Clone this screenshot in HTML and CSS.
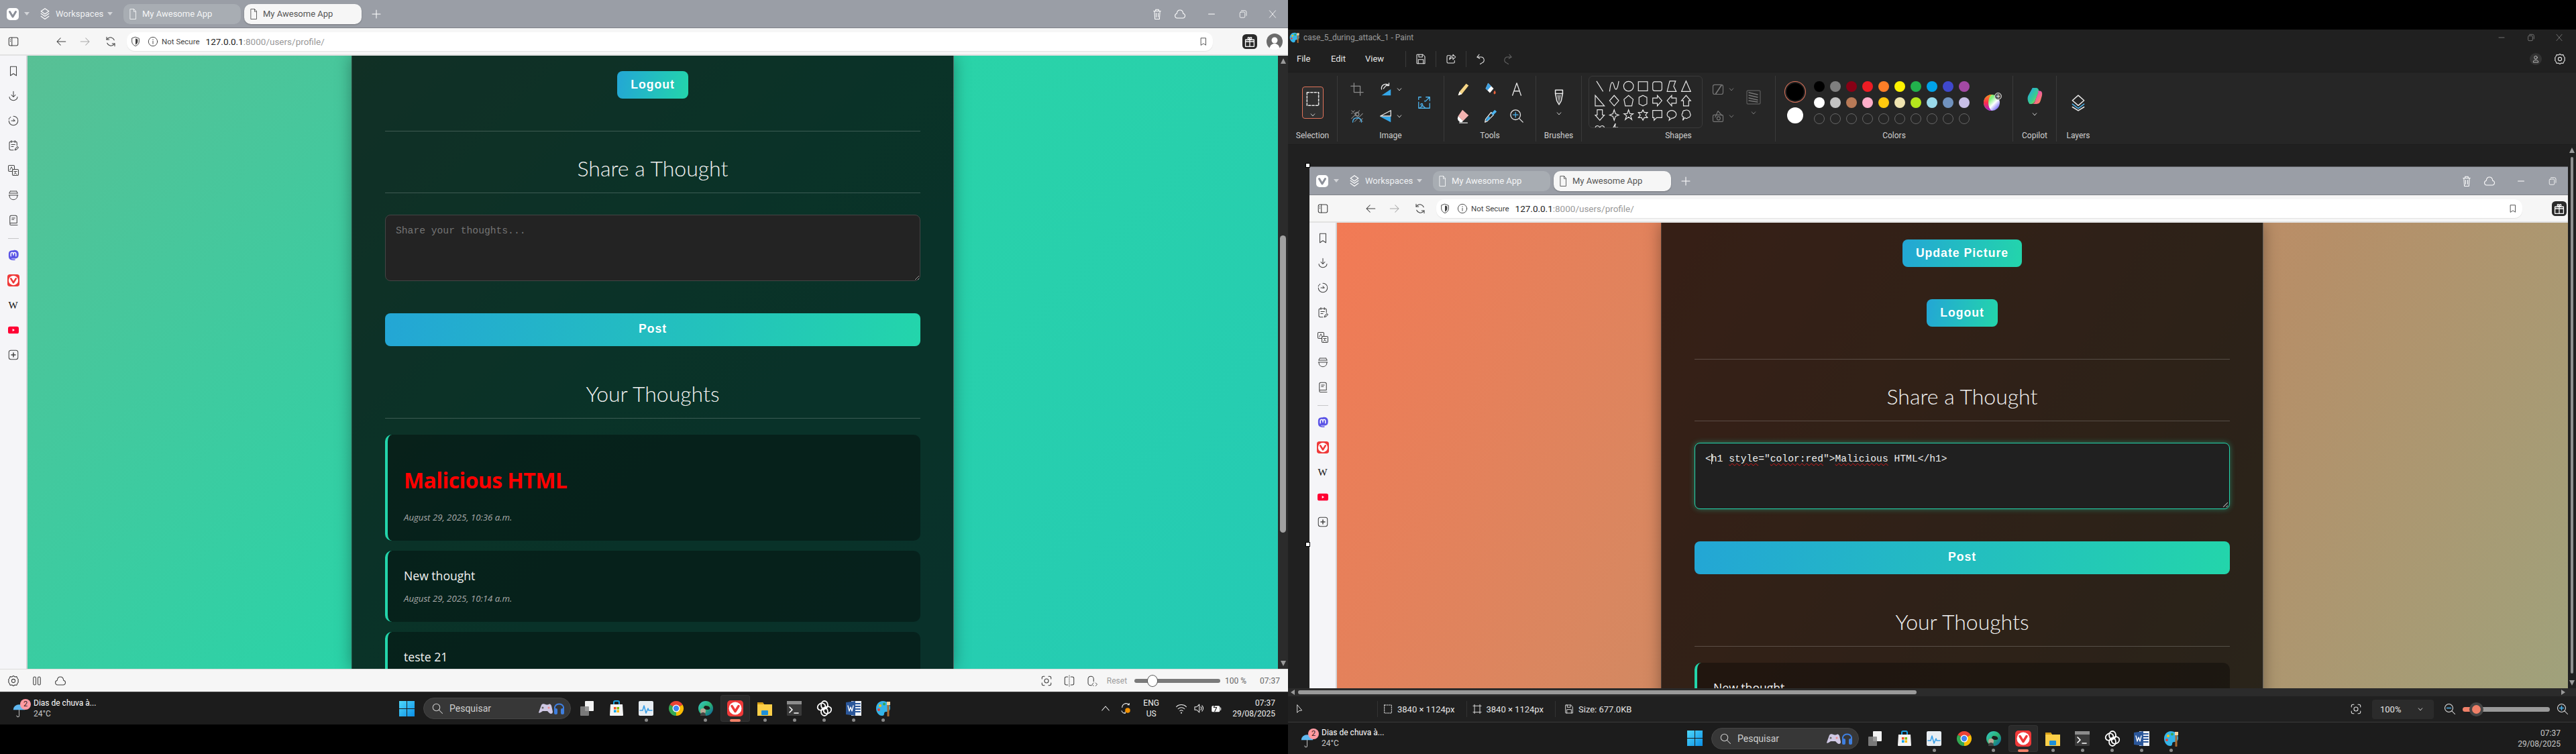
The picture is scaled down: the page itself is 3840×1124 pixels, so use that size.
FILE: index.html
```html
<!DOCTYPE html>
<html lang="en">
<head>
  <meta charset="UTF-8" />
  <title>My Awesome App</title>
  <link rel="stylesheet" href="styles.css">
</head>
<body>

<svg class="sprite" width="0" height="0">
  <defs>
    <symbol id="i-vivaldi" viewBox="0 0 18 18"><rect width="18" height="18" rx="5" fill="#fff" stroke="none"/><path d="M4.5 5.5 9 13l4.5-7.5" fill="none" stroke="#8c9099" stroke-width="3" stroke-linecap="round" stroke-linejoin="round"/></symbol>
    <symbol id="i-layers" viewBox="0 0 24 24"><path d="M12 2 19 7 12 12 5 7Z"/><path d="M5 11l7 5 7-5"/><path d="M5 16l7 5 7-5"/></symbol>
    <symbol id="i-doc" viewBox="0 0 24 24"><path d="M7 2h7l4 4v16H7Z"/><path d="M14 2v5h4"/></symbol>
    <symbol id="i-plus" viewBox="0 0 24 24"><path d="M12 4v16M4 12h16"/></symbol>
    <symbol id="i-trash" viewBox="0 0 24 24"><path d="M5 6h14M9 5V3h6v2M6.5 6l1 16h9l1-16"/><path d="M10 10v8M14 10v8"/></symbol>
    <symbol id="i-cloud" viewBox="0 0 24 24"><path d="M6.5 20a4.5 4.5 0 0 1-.8-8.9C6 7 8.6 4 12 4s6 3 6.4 7.1A4.5 4.5 0 0 1 17.500 20Z"/></symbol>
    <symbol id="i-min" viewBox="0 0 24 24"><path d="M6 12h12"/></symbol>
    <symbol id="i-max" viewBox="0 0 24 24"><rect x="7" y="8" width="10" height="11" rx="2"/><path d="M10 5h7a3 3 0 0 1 3 3v7"/></symbol>
    <symbol id="i-close" viewBox="0 0 24 24"><path d="M6 5l12 14M18 5 6 19"/></symbol>
    <symbol id="i-panel" viewBox="0 0 24 24"><rect x="3" y="4" width="18" height="16" rx="3"/><path d="M9 4v16M6 8v.5M6 11v.5"/></symbol>
    <symbol id="i-back" viewBox="0 0 24 24"><path d="M21 12H4M11 5l-7 7 7 7"/></symbol>
    <symbol id="i-fwd" viewBox="0 0 24 24"><path d="M3 12h17M13 5l7 7-7 7"/></symbol>
    <symbol id="i-reload" viewBox="0 0 24 24"><path d="M19 9a8 8 0 0 0-13-3L4 8M5 15a8 8 0 0 0 13 3l2-2"/><path d="M4 3v5h5M20 21v-5h-5"/></symbol>
    <symbol id="i-shield" viewBox="0 0 24 24"><path d="M12 2 20 5v7c0 5-3.500 8-8 10-4.500-2-8-5-8-10V5Z"/><path d="M12 5l5 2v5c0 3.500-2 5.500-5 7Z" fill="currentColor" stroke="none"/></symbol>
    <symbol id="i-info" viewBox="0 0 24 24"><circle cx="12" cy="12" r="10"/><path d="M12 11v6M12 7v1"/></symbol>
    <symbol id="i-bookmark" viewBox="0 0 24 24"><path d="M6 3h12v18l-6-4-6 4Z"/></symbol>
    <symbol id="i-gift" viewBox="0 0 24 24"><rect width="24" height="24" rx="6" fill="#2b2b2b" stroke="none"/><g stroke="#fff" fill="none"><rect x="5" y="9" width="14" height="11"/><path d="M5 12h14M12 9v11M12 9C9 9 8 5 10 5s2 4 2 4 0-4 2-4 1 4-2 4"/></g></symbol>
    <symbol id="i-avatar" viewBox="0 0 24 24"><circle cx="12" cy="12" r="12" fill="#6b6b6b" stroke="none"/><circle cx="12" cy="10" r="4.500" fill="#fff" stroke="none"/><path d="M4.500 22c1-5 4-7 7.500-7s6.500 2 7.500 7a12 12 0 0 1-15 0Z" fill="#fff" stroke="none"/></symbol>
    <symbol id="i-download" viewBox="0 0 24 24"><path d="M12 3v11M8 10l4 4 4-4"/><path d="M4 14a8 7 0 0 0 16 0"/></symbol>
    <symbol id="i-history" viewBox="0 0 24 24"><path d="M12 3a9 9 0 1 1-9 9" /><path d="M3 9l1-2M5 6l2-2" stroke-dasharray="2 1"/><path d="M8 12h7M12 9l3 3-3 .5"/></symbol>
    <symbol id="i-notes" viewBox="0 0 24 24"><path d="M12 21H7a3 3 0 0 1-3-3V7a3 3 0 0 1 3-3h9a3 3 0 0 1 3 3v5"/><path d="M8 2v4M15 2v4M8 10h7M8 14h4"/><path d="M15 21l1-3 4-4 2 2-4 4Z"/></symbol>
    <symbol id="i-translate" viewBox="0 0 24 24"><rect x="2" y="2" width="12" height="12" rx="2"/><rect x="10" y="10" width="12" height="12" rx="2" fill="#f5f5f7"/><path d="M5 11l3-6 3 6M13 14h6M16 14c0 3-1 5-3 6M15 17l4 3" stroke-width="1.200"/></symbol>
    <symbol id="i-pot" viewBox="0 0 24 24"><path d="M6 4h12M4 8h16M3 12h18"/><path d="M4 12c0 5 3 9 8 9s8-4 8-9"/><path d="M6 4c-1 1-2 2-2 4M18 4c1 1 2 2 2 4"/></symbol>
    <symbol id="i-book" viewBox="0 0 24 24"><path d="M5 18V6a3 3 0 0 1 3-3h8a3 3 0 0 1 3 3v12H7a2 2 0 0 0 0 4h13"/><path d="M9 8h6M9 11h4"/></symbol>
    <symbol id="i-mastodon" viewBox="0 0 24 24"><path d="M12 1.500C6 1.500 2.500 2.500 2.500 9c0 4-.5 9 3.500 11 3 1.500 7 1.500 9.500 1l-.5-2c-2 .5-6 .5-7-1.500 4 .5 12 1 13.500-3 .8-2 .8-3.500.8-5.500 0-6.500-4-8-9.300-8Z" fill="#5c55e6" stroke="none"/><path d="M7 13V8.500a2.300 2.300 0 0 1 5 0V11m0-2.500a2.300 2.300 0 0 1 5 0V13" fill="none" stroke="#fff" stroke-width="2"/></symbol>
    <symbol id="i-vivaldi-red" viewBox="0 0 24 24"><rect width="24" height="24" rx="5" fill="#ef3939" stroke="none"/><circle cx="12" cy="12" r="9.500" fill="#fff" stroke="none"/><path d="M7 8.500l5 8 5-8" fill="none" stroke="#ef3939" stroke-width="3.500" stroke-linecap="round" stroke-linejoin="round"/></symbol>
    <symbol id="i-youtube" viewBox="0 0 24 16"><rect width="24" height="16" rx="4" fill="#ff0033" stroke="none"/><path d="M10 5l5 3-5 3Z" fill="#fff" stroke="none"/></symbol>
    <symbol id="i-plus-box" viewBox="0 0 24 24"><rect x="3" y="3" width="18" height="18" rx="4"/><path d="M12 8v8M8 12h8" stroke-width="2"/></symbol>
    <symbol id="i-gear" viewBox="0 0 24 24"><path d="M12 2l3 2 3.500-.5L20 7l2 3-1 2 1 2-2 3-1.500 3.500L15 20l-3 2-3-2-3.500.5L4 17l-2-3 1-2-1-2 2-3 1.500-3.500L9 4Z"/><circle cx="12" cy="12" r="3.500"/></symbol>
    <symbol id="i-pause" viewBox="0 0 24 24"><rect x="5" y="4" width="5" height="16" rx="2.500"/><rect x="14" y="4" width="5" height="16" rx="2.500"/></symbol>
    <symbol id="i-capture" viewBox="0 0 24 24"><circle cx="12" cy="12" r="4"/><path d="M3 8V6a3 3 0 0 1 3-3h2M16 3h2a3 3 0 0 1 3 3v2M21 16v2a3 3 0 0 1-3 3h-2M8 21H6a3 3 0 0 1-3-3v-2"/></symbol>
    <symbol id="i-tile" viewBox="0 0 24 24"><path d="M9 4H6a3 3 0 0 0-3 3v10a3 3 0 0 0 3 3h3M15 4h3a3 3 0 0 1 3 3v10a3 3 0 0 1-3 3h-3"/><path d="M12 1v22" stroke-dasharray="2 2" stroke-width="1"/></symbol>
    <symbol id="i-mouse" viewBox="0 0 24 24"><path d="M11 21H9a5 5 0 0 1-5-5V8a5 5 0 0 1 5-5h1a5 5 0 0 1 5 5v5"/><path d="M15 16l-3 3 3 3M19 16l3 3-3 3" stroke-width="1.200"/></symbol>
    <symbol id="i-umbrella" viewBox="0 0 24 24"><path d="M2 11a10 9 0 0 1 20 0Z" fill="#60b8f0" stroke="none"/><path d="M12 11v10a2 2 0 0 1-4 0" fill="none" stroke="#bbb" stroke-width="1.200"/></symbol>
    <symbol id="i-win" viewBox="0 0 23 23"><defs><linearGradient id="wing" x1="0" y1="0" x2="1" y2="1"><stop offset="0" stop-color="#4fd8fa"/><stop offset="1" stop-color="#0b8fe6"/></linearGradient></defs><path d="M0 0h11v11H0ZM12 0h11v11H12ZM0 12h11v11H0ZM12 12h11v11H12Z" fill="url(#wing)" stroke="none"/></symbol>
    <symbol id="i-search" viewBox="0 0 24 24"><circle cx="10" cy="10" r="7"/><path d="M15 15l7 7"/></symbol>
    <symbol id="i-game" viewBox="0 0 42 24"><path d="M3 18 7 7c1-2 4-2 6-1 2 .8 3 .8 5 0 2-1 3 0 4 2l2 9c0 3-3 4-5 2l-3-3H9l-3 2c-2 1-3 1-3 0Z" fill="#cfc8e4" stroke="none"/><circle cx="9" cy="11" r="1.500" fill="#666" stroke="none"/><circle cx="18" cy="11" r="1.500" fill="#e88" stroke="none"/><path d="M27 14V10a7 7 0 0 1 13 0v4" fill="none" stroke="#3f7fe0" stroke-width="2"/><rect x="26" y="12" width="5" height="9" rx="2" fill="#3f7fe0" stroke="none"/><rect x="36" y="12" width="5" height="9" rx="2" fill="#3f7fe0" stroke="none"/></symbol>
    <symbol id="i-taskview" viewBox="0 0 24 24"><rect x="9" y="1" width="13" height="15" rx="1" fill="#f2f2f2" stroke="none"/><rect x="2" y="9" width="13" height="14" rx="1" fill="#8a8a8a" fill-opacity=".85" stroke="none"/></symbol>
    <symbol id="i-store" viewBox="0 0 24 24"><path d="M8 7V3a2 2 0 0 1 2-2h4a2 2 0 0 1 2 2v4" fill="none" stroke="#1ba1e2" stroke-width="2"/><path d="M3 6h18l1 16a1 1 0 0 1-1 1H3a1 1 0 0 1-1-1Z" fill="#f3f3f3" stroke="none"/><path d="M8 10h3.500v3.500H8Z" fill="#f25022" stroke="none"/><path d="M12.500 10H16v3.500h-3.500Z" fill="#7fba00" stroke="none"/><path d="M8 14.500h3.500V18H8Z" fill="#00a4ef" stroke="none"/><path d="M12.500 14.500H16V18h-3.500Z" fill="#ffb900" stroke="none"/></symbol>
    <symbol id="i-taskmgr" viewBox="0 0 24 24"><rect x="1" y="1" width="22" height="22" rx="2" fill="#e8edf2" stroke="none"/><path d="M3 15h4l2-7 3 11 3-7 1 3h5" fill="none" stroke="#3aa0e8" stroke-width="1.600"/></symbol>
    <symbol id="i-chrome" viewBox="0 0 24 24"><path d="M12 12 2.470 6.500A11 11 0 0 1 21.530 6.500Z" fill="#ea4335" stroke="none"/><path d="M12 12 21.530 6.500A11 11 0 0 1 12 23Z" fill="#fbbc04" stroke="none"/><path d="M12 12 12 23A11 11 0 0 1 2.470 6.500Z" fill="#34a853" stroke="none"/><circle cx="12" cy="12" r="5.500" fill="#fff" stroke="none"/><circle cx="12" cy="12" r="4.200" fill="#4285f4" stroke="none"/></symbol>
    <symbol id="i-edge" viewBox="0 0 24 24"><defs><linearGradient id="edg" x1="0" y1="0" x2="1" y2="1"><stop offset="0" stop-color="#37c6d0"/><stop offset=".5" stop-color="#2bb673"/><stop offset="1" stop-color="#0c59a4"/></linearGradient></defs><circle cx="12" cy="12" r="11" fill="url(#edg)" stroke="none"/><path d="M12 8c5 0 7 3 6 5-3 2-8 1-9-2 0-1 1-3 3-3Z" fill="#1d1d1d" stroke="none"/><circle cx="8" cy="16" r="4" fill="#b9a796" stroke="none"/><path d="M4 23c0-4 2-5 4-5s4 1 4 5Z" fill="#444" stroke="none"/></symbol>
    <symbol id="i-folder" viewBox="0 0 24 24"><path d="M1 3h8l2 3h12v17H1Z" fill="#fccf48" stroke="none"/><path d="M1 3h8l2 3H1Z" fill="#d59d16" stroke="none"/><rect x="7" y="15" width="10" height="7" rx="1" fill="#1d8fd8" stroke="none"/></symbol>
    <symbol id="i-term" viewBox="0 0 24 24"><rect x="1" y="1" width="22" height="22" rx="1.500" fill="#3a3a3a" stroke="none"/><rect x="1" y="1" width="22" height="5" fill="#8c8c8c" stroke="none"/><path d="M5 10l4 4-4 4" fill="none" stroke="#fff" stroke-width="1.600"/><path d="M12 19h6" stroke="#fff" stroke-width="1.600"/></symbol>
    <symbol id="i-gpt" viewBox="0 0 24 24"><g fill="none" stroke="#fff" stroke-width="1.800"><ellipse cx="12" cy="7" rx="5" ry="6"/><ellipse cx="12" cy="17" rx="5" ry="6"/><ellipse cx="7.500" cy="9.500" rx="5" ry="6" transform="rotate(60 7.500 9.500)"/><ellipse cx="16.500" cy="14.500" rx="5" ry="6" transform="rotate(60 16.500 14.500)"/></g></symbol>
    <symbol id="i-word" viewBox="0 0 24 24"><path d="M8 1h15v22H8Z" fill="#eef2f8" stroke="none"/><path d="M14 5h7M14 9h7M14 13h7M14 17h7" stroke="#2b579a" stroke-width="2"/><path d="M0 3 14 1v22L0 21Z" fill="#2b579a" stroke="none"/><path d="M3 8l2 8 2-6 2 6 2-8" fill="none" stroke="#fff" stroke-width="1.300"/></symbol>
    <symbol id="i-paintapp" viewBox="0 0 24 24"><path d="M11 1C5 1 1 6 1 12s4 11 9 11c2 0 3-1 3-3s1-3 3-3c3 0 6-1 6-6 0-6-5-10-11-10Z" fill="#34b4e8" stroke="none"/><circle cx="7" cy="8" r="2" fill="#f2c018" stroke="none"/><circle cx="13" cy="5.500" r="2" fill="#34a853" stroke="none"/><circle cx="5" cy="14" r="2" fill="#e8453c" stroke="none"/><path d="M19 6v17" stroke="#a86a32" stroke-width="3"/><path d="M17 2h5v5h-5Z" fill="#f3d3a2" stroke="none"/></symbol>
    <symbol id="i-caret" viewBox="0 0 24 24"><path d="M5 16l7-8 7 8"/></symbol>
    <symbol id="i-sync" viewBox="0 0 24 24"><path d="M5 10a8 8 0 0 1 13-6M19 2v3h-3M4 17l2 3c1 1 3 2 5 2M8 21l3 1 0-3"/><circle cx="16" cy="16" r="5" fill="#f29100" stroke="none"/></symbol>
    <symbol id="i-wifi" viewBox="0 0 24 24"><path d="M2 9a14 14 0 0 1 20 0M5.500 13a9 9 0 0 1 13 0M9 17a4 4 0 0 1 6 0"/><path d="M12 20.500v.5" stroke-width="2.400"/></symbol>
    <symbol id="i-volume" viewBox="0 0 24 24"><path d="M4 9h4l5-5v16l-5-5H4Z"/><path d="M16 9a4 4 0 0 1 0 6M18.500 6.500a8 8 0 0 1 0 11"/></symbol>
    <symbol id="i-battery" viewBox="0 0 24 24"><rect x="3" y="7" width="16" height="12" rx="2" fill="#fff" stroke="none"/><path d="M19 11h2v4h-2" /><path d="M11 2 7 10h6l-4 8" stroke="#1c1c1c" stroke-width="1.400"/></symbol>
    <symbol id="i-chev" viewBox="0 0 12 12"><path d="M3 4.500 6 8l3-3.500"/></symbol>
    <symbol id="i-save" viewBox="0 0 24 24"><path d="M5 3h11l4 4v14H5a1 1 0 0 1-1-1V4a1 1 0 0 1 1-1Z"/><path d="M8 3v5h7V3M7 21v-8h10v8"/></symbol>
    <symbol id="i-share" viewBox="0 0 24 24"><path d="M11 5H6a2 2 0 0 0-2 2v11a2 2 0 0 0 2 2h11a2 2 0 0 0 2-2v-3"/><path d="M21 8l-5-5v3c-5 0-7 3-7 7 2-3 4-4 7-4v4Z"/></symbol>
    <symbol id="i-undo" viewBox="0 0 24 24"><path d="M8 3 4 8l5 3"/><path d="M4 8h8a6 6 0 0 1 2 11.500L10 22"/></symbol>
    <symbol id="i-redo" viewBox="0 0 24 24"><path d="M16 3l4 5-5 3"/><path d="M20 8h-8a6 6 0 0 0-2 11.500L14 22"/></symbol>
    <symbol id="i-dashbox" viewBox="0 0 24 24"><rect x="4" y="3" width="16" height="18" stroke-dasharray="3 2"/></symbol>
    <symbol id="i-crop" viewBox="0 0 24 24"><path d="M7 2v15h15M2 7h15v15"/></symbol>
    <symbol id="i-rotate" viewBox="0 0 24 24"><path d="M21 12v10H6Z" fill="#35a7e8" stroke="none"/><path d="M6 12a7 7 0 0 1 12-6M18 2v4h-4M14 5l-5 6"/></symbol>
    <symbol id="i-resize" viewBox="0 0 24 24"><g stroke="#4db4ee"><path d="M3 7V3h4M21 3l-7 7M15 3h6v6M3 11v10h18v-8"/><circle cx="8" cy="15" r="1.500"/><path d="M4 21l6-4 4 4M13 9v1"/></g></symbol>
    <symbol id="i-erase-sel" viewBox="0 0 24 24"><path d="M3 3l18 18M8 3 3 8M16 3 3 16M21 8 8 21M21 16l-5 5" stroke-width="1.100"/><circle cx="12" cy="9" r="3"/><path d="M5 22c0-5 3-7 7-7s7 2 7 7" stroke="#4db4ee"/></symbol>
    <symbol id="i-flip" viewBox="0 0 24 24"><path d="M21 12H4L21 3Z"/><path d="M21 13H4l17 9Z" fill="#35a7e8" stroke="none"/></symbol>
    <symbol id="i-pencil" viewBox="0 0 24 24"><path d="M6 16 17 3l4 3L10 20l-6 2Z" fill="#f5d586" stroke="none"/><path d="M6 16l4 4-6 2Z" fill="#fff" stroke="none"/></symbol>
    <symbol id="i-fill" viewBox="0 0 24 24"><path d="M9 2 18 11l-6 7-7-7Z" fill="#fff" stroke="none"/><path d="M9 2l5 5-6 7-3-3Z" fill="#3d9fe0" stroke="none"/><path d="M20 14c2 3 2 5 0 6s-3-3 0-6Z" fill="#e8623c" stroke="none"/></symbol>
    <symbol id="i-text-a" viewBox="0 0 24 24"><path d="M5 22 12 2l7 20M8 15h8"/></symbol>
    <symbol id="i-eraser" viewBox="0 0 24 24"><path d="M11 2 21 11l-9 9-8-8Z" fill="#f3b3b0" stroke="none"/><path d="M4 12l8 8-2 2H7l-3-3-1-3Z" fill="#fff" stroke="none"/><path d="M6 23h13"/></symbol>
    <symbol id="i-picker" viewBox="0 0 24 24"><path d="M14 6 18 10 8 20l-4 2 1-5Z"/><path d="M14 8l6-6 3 3-6 6Z" fill="#4db4ee" stroke="none"/><path d="M10 12l3 3-5 5-3-1Z" fill="#35a7e8" stroke="none"/></symbol>
    <symbol id="i-magnify" viewBox="0 0 24 24"><circle cx="10" cy="10" r="8"/><path d="M16 16l6 6"/><path d="M10 6v8M6 10h8" stroke="#4db4ee"/></symbol>
    <symbol id="i-brush" viewBox="0 0 24 24"><path d="M7 2h10v5l-2 10-3 5-3-5-2-10Z"/><path d="M7 7h10"/><path d="M9 9l3 12 3-12Z" fill="#888" stroke="none"/></symbol>
    <symbol id="i-outline" viewBox="0 0 24 24"><rect x="3" y="4" width="18" height="17" rx="3" stroke="#777"/><path d="M8 20 18 5" stroke="#777" stroke-width="2"/></symbol>
    <symbol id="i-shapefill" viewBox="0 0 24 24"><g stroke="#777"><rect x="3" y="10" width="18" height="12" rx="2"/><path d="M7 14 12 3l7 8"/><circle cx="13" cy="16" r="3"/></g></symbol>
    <symbol id="i-size" viewBox="0 0 24 24"><rect x="2" y="2" width="20" height="20" rx="2" stroke="#555"/><g stroke="#777"><path d="M5 5l13 3M5 9l13 3M5 13l13 3M5 17l13 2"/></g></symbol>
    <symbol id="i-wheel" viewBox="0 0 24 24"><defs><linearGradient id="wh1" x1="0" y1="0" x2="1" y2="1"><stop offset="0" stop-color="#ffe23a"/><stop offset=".35" stop-color="#7df07d"/><stop offset=".6" stop-color="#fff"/><stop offset="1" stop-color="#3d2cf0"/></linearGradient><linearGradient id="wh2" x1="0" y1="0" x2="0" y2="1"><stop offset="0" stop-color="#ff9020"/><stop offset=".5" stop-color="#ff2a4a"/><stop offset="1" stop-color="#a020d0"/></linearGradient></defs><circle cx="12" cy="12" r="12" fill="url(#wh1)" stroke="none"/><path d="M12 0A12 12 0 0 0 12 24C6 20 5 6 12 0Z" fill="url(#wh2)" stroke="none"/></symbol>
    <symbol id="i-copilot" viewBox="0 0 24 24"><defs><linearGradient id="cp1" x1="0" y1="0" x2="1" y2="1"><stop offset="0" stop-color="#1fa0f0"/><stop offset=".6" stop-color="#3ad08a"/><stop offset="1" stop-color="#f3d22c"/></linearGradient><linearGradient id="cp2" x1="0" y1="0" x2="1" y2="1"><stop offset="0" stop-color="#b04ae0"/><stop offset=".5" stop-color="#f0609a"/><stop offset="1" stop-color="#ff9a3c"/></linearGradient></defs><path d="M9 1h5c2 0 3 1 4 4l-5 13c-1 3-3 5-5 5H5C2 19 2 15 3 12Z" fill="url(#cp1)" stroke="none"/><path d="M14 5h5c3 0 4 3 3 7l-2 7c-1 3-3 4-5 4H9c2 0 3-2 4-5l4-11c0-1-1-2-3-2Z" fill="url(#cp2)" stroke="none"/></symbol>
    <symbol id="i-ptlayers" viewBox="0 0 24 24"><path d="M12 2 20 9l-8 7-8-7Z"/><path d="M4 14l8 6 8-6" stroke="#4db4ee"/><path d="M4 18l8 5 8-5"/></symbol>
    <symbol id="i-cursor" viewBox="0 0 24 24"><path d="M7 3v17l4-4 6-1Z"/></symbol>
    <symbol id="i-dimensions" viewBox="0 0 24 24"><path d="M6 2v20M18 2v20M3 5h18M3 19h18"/></symbol>
    <symbol id="i-profile" viewBox="0 0 24 24"><circle cx="12" cy="12" r="12" fill="#333" stroke="none"/><circle cx="12" cy="9" r="3"/><path d="M7 18c0-3 2-4 5-4s5 1 5 4Z"/></symbol>
    <symbol id="i-zoomout" viewBox="0 0 24 24"><circle cx="10" cy="10" r="8"/><path d="M16 16l6 6"/><path d="M6 10h8" stroke="#4db4ee" stroke-width="2"/></symbol>
    <symbol id="i-zoomin" viewBox="0 0 24 24"><circle cx="10" cy="10" r="8"/><path d="M16 16l6 6"/><path d="M10 6v8M6 10h8" stroke="#4db4ee" stroke-width="2"/></symbol>
  </defs>
</svg>

<!-- left half: the browser on its own -->
<main class="screen">
  <section class="browser browser-teal">
    <div class="tabbar">
      <svg class="ic logo"><use href="#i-vivaldi"/></svg>
      <span class="tri"></span>
      <svg class="ic ws-ic"><use href="#i-layers"/></svg>
      <span class="ws-label">Workspaces</span>
      <span class="tri"></span>
      <div class="tab"><svg class="ic"><use href="#i-doc"/></svg>My Awesome App</div>
      <div class="tab tab-active"><svg class="ic"><use href="#i-doc"/></svg>My Awesome App</div>
      <svg class="ic new-tab"><use href="#i-plus"/></svg>
      <div class="win-controls">
        <svg class="ic"><use href="#i-trash"/></svg>
        <svg class="ic"><use href="#i-cloud"/></svg>
        <svg class="ic ctl-min"><use href="#i-min"/></svg>
        <svg class="ic ctl"><use href="#i-max"/></svg>
        <svg class="ic ctl"><use href="#i-close"/></svg>
      </div>
    </div>
    <div class="addressbar">
      <svg class="ic panel-ic"><use href="#i-panel"/></svg>
      <svg class="ic nav-back"><use href="#i-back"/></svg>
      <svg class="ic nav-fwd"><use href="#i-fwd"/></svg>
      <svg class="ic nav-reload"><use href="#i-reload"/></svg>
      <div class="urlfield">
        <svg class="ic shield"><use href="#i-shield"/></svg>
        <svg class="ic info"><use href="#i-info"/></svg>
        <span class="not-secure">Not Secure</span>
        <span class="url"><b>127.0.0.1</b>:8000/users/profile/</span>
        <svg class="ic url-mark"><use href="#i-bookmark"/></svg>
      </div>
      <svg class="ic gift"><use href="#i-gift"/></svg>
      <svg class="ic avatar"><use href="#i-avatar"/></svg>
    </div>
    <div class="browser-main">
      <nav class="sidebar">
        <svg class="ic"><use href="#i-bookmark"/></svg>
        <svg class="ic"><use href="#i-download"/></svg>
        <svg class="ic"><use href="#i-history"/></svg>
        <svg class="ic"><use href="#i-notes"/></svg>
        <svg class="ic"><use href="#i-translate"/></svg>
        <svg class="ic"><use href="#i-pot"/></svg>
        <svg class="ic"><use href="#i-book"/></svg>
        <hr class="side-rule">
        <svg class="ic"><use href="#i-mastodon"/></svg>
        <svg class="ic"><use href="#i-vivaldi-red"/></svg>
        <span class="wiki">W</span>
        <svg class="ic yt"><use href="#i-youtube"/></svg>
        <svg class="ic"><use href="#i-plus-box"/></svg>
      </nav>
      <div class="page">
        <div class="profile">
          <a class="btn">Logout</a>
          <hr class="rule">
          <h2 class="section-title">Share a Thought</h2>
          <textarea class="thought-input" placeholder="Share your thoughts..."></textarea>
          <a class="btn btn-wide">Post</a>
          <h2 class="section-title">Your Thoughts</h2>
          <article class="thought">
            <h1 class="evil">Malicious HTML</h1>
            <p class="date">August 29, 2025, 10:36 a.m.</p>
          </article>
          <article class="thought">
            <p class="body">New thought</p>
            <p class="date">August 29, 2025, 10:14 a.m.</p>
          </article>
          <article class="thought">
            <p class="body">teste 21</p>
          </article>
        </div>
      </div>
      <div class="page-scroll">
        <span class="arrow-up"></span>
        <span class="page-thumb"></span>
        <span class="arrow-down"></span>
      </div>
    </div>
    <footer class="statusbar">
      <svg class="ic"><use href="#i-gear"/></svg>
      <svg class="ic"><use href="#i-pause"/></svg>
      <svg class="ic"><use href="#i-cloud"/></svg>
      <div class="status-right">
        <svg class="ic"><use href="#i-capture"/></svg>
        <svg class="ic"><use href="#i-tile"/></svg>
        <svg class="ic"><use href="#i-mouse"/></svg>
        <span class="reset">Reset</span>
        <div class="zoom-track"><span class="zoom-knob"></span></div>
        <span class="zoom-pct">100 %</span>
        <span class="status-time">07:37</span>
      </div>
    </footer>
  </section>

  <div class="taskbar">
    <div class="weather">
      <svg class="ic umbrella"><use href="#i-umbrella"/></svg>
      <span class="weather-badge">2</span>
      <div class="weather-text"><span>Dias de chuva à...</span><span class="dim">24°C</span></div>
    </div>
    <svg class="ic win-ic"><use href="#i-win"/></svg>
    <div class="search">
      <svg class="ic"><use href="#i-search"/></svg>
      <span>Pesquisar</span>
      <svg class="ic game"><use href="#i-game"/></svg>
    </div>
    <div class="apps">
      <span class="app"><svg class="ic"><use href="#i-taskview"/></svg></span>
      <span class="app"><svg class="ic"><use href="#i-store"/></svg></span>
      <span class="app"><svg class="ic"><use href="#i-taskmgr"/></svg><i class="dot"></i></span>
      <span class="app"><svg class="ic"><use href="#i-chrome"/></svg></span>
      <span class="app"><svg class="ic"><use href="#i-edge"/></svg><i class="dot"></i></span>
      <span class="app app-active"><svg class="ic"><use href="#i-vivaldi-red"/></svg><i class="dot"></i></span>
      <span class="app"><svg class="ic"><use href="#i-folder"/></svg><i class="dot"></i></span>
      <span class="app"><svg class="ic"><use href="#i-term"/></svg><i class="dot"></i></span>
      <span class="app"><svg class="ic"><use href="#i-gpt"/></svg><i class="dot"></i></span>
      <span class="app"><svg class="ic"><use href="#i-word"/></svg><i class="dot"></i></span>
      <span class="app"><svg class="ic"><use href="#i-paintapp"/></svg><i class="dot"></i></span>
    </div>
    <div class="tray">
      <svg class="ic"><use href="#i-caret"/></svg>
      <svg class="ic"><use href="#i-sync"/></svg>
      <div class="lang"><span>ENG</span><span>US</span></div>
      <svg class="ic"><use href="#i-wifi"/></svg>
      <svg class="ic"><use href="#i-volume"/></svg>
      <svg class="ic"><use href="#i-battery"/></svg>
      <div class="clock"><span>07:37</span><span>29/08/2025</span></div>
    </div>
  </div>
</main>

<!-- right half: Paint, holding a screenshot of the same browser -->
<main class="screen screen-paint">
  <section class="paint">
    <div class="paint-title">
      <svg class="ic"><use href="#i-paintapp"/></svg>
      <span>case_5_during_attack_1 - Paint</span>
      <div class="paint-ctl">
        <svg class="ic"><use href="#i-min"/></svg>
        <svg class="ic"><use href="#i-max"/></svg>
        <svg class="ic"><use href="#i-close"/></svg>
      </div>
    </div>
    <div class="paint-menu">
      <span class="menu-item">File</span>
      <span class="menu-item">Edit</span>
      <span class="menu-item">View</span>
      <span class="menu-sep"></span>
      <svg class="ic"><use href="#i-save"/></svg>
      <span class="menu-sep"></span>
      <svg class="ic"><use href="#i-share"/></svg>
      <span class="menu-sep"></span>
      <svg class="ic"><use href="#i-undo"/></svg>
      <svg class="ic redo"><use href="#i-redo"/></svg>
      <svg class="ic menu-profile"><use href="#i-profile"/></svg>
      <svg class="ic menu-gear"><use href="#i-gear"/></svg>
    </div>
    <div class="ribbon">
      <div class="group group-selection">
        <div class="group-body">
          <div class="sel-box">
            <svg class="ic"><use href="#i-dashbox"/></svg>
            <svg class="chev"><use href="#i-chev"/></svg>
          </div>
        </div>
        <span class="group-label">Selection</span>
      </div>
      <div class="group group-image">
        <div class="group-body">
          <div class="image-grid">
            <svg class="ic dim-ic"><use href="#i-crop"/></svg>
            <span class="with-chev"><svg class="ic"><use href="#i-rotate"/></svg><svg class="chev"><use href="#i-chev"/></svg></span>
            <svg class="ic tall"><use href="#i-resize"/></svg>
            <svg class="ic dim-ic"><use href="#i-erase-sel"/></svg>
            <span class="with-chev"><svg class="ic"><use href="#i-flip"/></svg><svg class="chev"><use href="#i-chev"/></svg></span>
          </div>
        </div>
        <span class="group-label">Image</span>
      </div>
      <div class="group group-tools">
        <div class="group-body">
          <div class="tool-grid">
            <svg class="ic"><use href="#i-pencil"/></svg>
            <svg class="ic"><use href="#i-fill"/></svg>
            <svg class="ic"><use href="#i-text-a"/></svg>
            <svg class="ic"><use href="#i-eraser"/></svg>
            <svg class="ic"><use href="#i-picker"/></svg>
            <svg class="ic"><use href="#i-magnify"/></svg>
          </div>
        </div>
        <span class="group-label">Tools</span>
      </div>
      <div class="group group-brushes">
        <div class="group-body stack">
          <svg class="ic big"><use href="#i-brush"/></svg>
          <svg class="chev"><use href="#i-chev"/></svg>
        </div>
        <span class="group-label">Brushes</span>
      </div>
      <div class="group group-shapes">
        <div class="group-body shapes-body">
          <svg class="shape-box" viewBox="0 0 170 78" width="170" height="78">
            <g fill="none" stroke="#e8e8e8" stroke-width="1.200">
              <path transform="translate(15 15)" d="M-5-8 5 8"/>
              <path transform="translate(37 15)" d="M-7 8C-5-10-2-8 0 0S5 6 7-8"/>
              <circle cx="59" cy="15" r="7.500"/>
              <rect x="74" y="8" width="14" height="14"/>
              <rect x="96" y="8" width="14" height="14" rx="3"/>
              <path transform="translate(125 15)" d="M-3-8H6L3 0 7 8H-7Z"/>
              <path transform="translate(147 15)" d="M0-8 7 8H-7Z"/>
              <path transform="translate(15 37)" d="M-7-8 7 8H-7Z"/>
              <path transform="translate(37 37)" d="M0-8 7 0 0 8-7 0Z"/>
              <path transform="translate(59 37)" d="M0-8 7-2 5 8H-5L-7-2Z"/>
              <path transform="translate(81 37)" d="M0-8 6-5V5L0 8-6 5V-5Z"/>
              <path transform="translate(103 37)" d="M-7-4H0V-8L7 0 0 8V4H-7Z"/>
              <path transform="translate(125 37)" d="M7-4H0V-8L-7 0 0 8V4H7Z"/>
              <path transform="translate(147 37)" d="M-4 8V0H-7L0-8 7 0H4V8Z"/>
              <path transform="translate(15 59)" d="M-4-8V0H-7L0 8 7 0H4V-8Z"/>
              <path transform="translate(37 59)" d="M0-8 2-2 7 0 2 2 0 8-2 2-7 0-2-2Z"/>
              <path transform="translate(59 59)" d="M0-8 2-2H7L3 1 5 7 0 3-5 7-3 1-7-2H-2Z"/>
              <path transform="translate(81 59)" d="M0-8 2-4H7L4 0 7 4H2L0 8-2 4H-7L-4 0-7-4H-2Z"/>
              <path transform="translate(103 59)" d="M-7-7H7V4H-1L-5 8V4H-7Z"/>
              <path transform="translate(125 59)" d="M0-7C4-7 7-4 7-1S4 5 0 5L-4 8-3 4C-6 3-7 1-7-1-7-4-4-7 0-7Z"/>
              <path transform="translate(147 59)" d="M-2-7C2-9 6-6 6-3 8 0 6 4 3 4 1 6-1 5-2 4L-5 8-4 3C-7 2-7-2-5-3-6-5-4-7-2-7Z"/>
              <path transform="translate(15 80)" d="M0-2C-2-6-7-5-7-1-7 3-2 5 0 8 2 5 7 3 7-1 7-5 2-6 0-2Z"/>
              <path transform="translate(37 80)" d="M2-8-3 1H0L-3 8 5-2H1Z"/>
            </g>
          </svg>
          <div class="shape-opts">
            <span class="with-chev"><svg class="ic"><use href="#i-outline"/></svg><svg class="chev dim-chev"><use href="#i-chev"/></svg></span>
            <span class="with-chev"><svg class="ic"><use href="#i-shapefill"/></svg><svg class="chev dim-chev"><use href="#i-chev"/></svg></span>
          </div>
          <div class="stack">
            <svg class="ic"><use href="#i-size"/></svg>
            <svg class="chev dim-chev"><use href="#i-chev"/></svg>
          </div>
        </div>
        <span class="group-label">Shapes</span>
      </div>
      <div class="group group-colors">
        <div class="group-body colors-body">
          <div class="current-colors">
            <span class="color-now"></span>
            <span class="color-alt"></span>
          </div>
          <div class="palette">
            <i style="background:#000"></i><i style="background:#7f7f7f"></i><i style="background:#880015"></i><i style="background:#ed1c24"></i><i style="background:#ff7f27"></i><i style="background:#fff200"></i><i style="background:#22b14c"></i><i style="background:#00a2e8"></i><i style="background:#3f48cc"></i><i style="background:#a349a4"></i>
            <i style="background:#fff"></i><i style="background:#c3c3c3"></i><i style="background:#b97a57"></i><i style="background:#ffaec9"></i><i style="background:#ffc90e"></i><i style="background:#efe4b0"></i><i style="background:#b5e61d"></i><i style="background:#99d9ea"></i><i style="background:#7092be"></i><i style="background:#c8bfe7"></i>
            <i class="empty"></i><i class="empty"></i><i class="empty"></i><i class="empty"></i><i class="empty"></i><i class="empty"></i><i class="empty"></i><i class="empty"></i><i class="empty"></i><i class="empty"></i>
          </div>
          <div class="wheel">
            <svg class="ic"><use href="#i-wheel"/></svg>
            <span class="wheel-plus">+</span>
          </div>
        </div>
        <span class="group-label">Colors</span>
      </div>
      <div class="group group-copilot">
        <div class="group-body stack">
          <svg class="ic big"><use href="#i-copilot"/></svg>
          <svg class="chev"><use href="#i-chev"/></svg>
        </div>
        <span class="group-label">Copilot</span>
      </div>
      <div class="group group-layers">
        <div class="group-body stack">
          <svg class="ic big"><use href="#i-ptlayers"/></svg>
        </div>
        <span class="group-label">Layers</span>
      </div>
    </div>

    <div class="canvas-row">
      <div class="canvas">
        <span class="handle handle-top"></span>
        <span class="handle handle-mid"></span>
        <section class="browser browser-orange">
          <div class="tabbar">
            <svg class="ic logo"><use href="#i-vivaldi"/></svg>
            <span class="tri"></span>
            <svg class="ic ws-ic"><use href="#i-layers"/></svg>
            <span class="ws-label">Workspaces</span>
            <span class="tri"></span>
            <div class="tab"><svg class="ic"><use href="#i-doc"/></svg>My Awesome App</div>
            <div class="tab tab-active"><svg class="ic"><use href="#i-doc"/></svg>My Awesome App</div>
            <svg class="ic new-tab"><use href="#i-plus"/></svg>
            <div class="win-controls">
              <svg class="ic"><use href="#i-trash"/></svg>
              <svg class="ic"><use href="#i-cloud"/></svg>
              <svg class="ic ctl-min"><use href="#i-min"/></svg>
              <svg class="ic ctl"><use href="#i-max"/></svg>
              <svg class="ic ctl"><use href="#i-close"/></svg>
            </div>
          </div>
          <div class="addressbar">
            <svg class="ic panel-ic"><use href="#i-panel"/></svg>
            <svg class="ic nav-back"><use href="#i-back"/></svg>
            <svg class="ic nav-fwd"><use href="#i-fwd"/></svg>
            <svg class="ic nav-reload"><use href="#i-reload"/></svg>
            <div class="urlfield">
              <svg class="ic shield"><use href="#i-shield"/></svg>
              <svg class="ic info"><use href="#i-info"/></svg>
              <span class="not-secure">Not Secure</span>
              <span class="url"><b>127.0.0.1</b>:8000/users/profile/</span>
              <svg class="ic url-mark"><use href="#i-bookmark"/></svg>
            </div>
            <svg class="ic gift"><use href="#i-gift"/></svg>
          </div>
          <div class="browser-main">
            <nav class="sidebar">
              <svg class="ic"><use href="#i-bookmark"/></svg>
              <svg class="ic"><use href="#i-download"/></svg>
              <svg class="ic"><use href="#i-history"/></svg>
              <svg class="ic"><use href="#i-notes"/></svg>
              <svg class="ic"><use href="#i-translate"/></svg>
              <svg class="ic"><use href="#i-pot"/></svg>
              <svg class="ic"><use href="#i-book"/></svg>
              <hr class="side-rule">
              <svg class="ic"><use href="#i-mastodon"/></svg>
              <svg class="ic"><use href="#i-vivaldi-red"/></svg>
              <span class="wiki">W</span>
              <svg class="ic yt"><use href="#i-youtube"/></svg>
              <svg class="ic"><use href="#i-plus-box"/></svg>
            </nav>
            <div class="page">
              <div class="profile">
                <a class="btn btn-first">Update Picture</a>
                <a class="btn">Logout</a>
                <hr class="rule">
                <h2 class="section-title">Share a Thought</h2>
                <div class="thought-input thought-input-focus"><span class="caret">&lt;</span>h1 <u>style</u>=&quot;<u>color:red</u>&quot;&gt;<u>Malicious</u> HTML&lt;/h1&gt;<svg class="grip" viewBox="0 0 8 8"><path d="M1 7 7 1M5 7 7 5"/></svg></div>
                <a class="btn btn-wide">Post</a>
                <h2 class="section-title">Your Thoughts</h2>
                <article class="thought">
                  <p class="body">New thought</p>
                </article>
              </div>
            </div>
            <div class="page-gutter"></div>
          </div>
        </section>
      </div>
      <div class="canvas-vscroll">
        <span class="arrow-up"></span>
        <span class="canvas-thumb"></span>
        <span class="arrow-down"></span>
      </div>
    </div>

    <div class="canvas-hscroll">
      <span class="arrow-left"></span>
      <span class="canvas-hthumb"></span>
      <span class="arrow-right"></span>
    </div>

    <footer class="paint-status">
      <span class="ps-cell ps-cursor"><svg class="ic"><use href="#i-cursor"/></svg></span>
      <span class="ps-cell"><svg class="ic"><use href="#i-dashbox"/></svg>3840 × 1124px</span>
      <span class="ps-cell"><svg class="ic"><use href="#i-dimensions"/></svg>3840 × 1124px</span>
      <span class="ps-cell ps-last"><svg class="ic"><use href="#i-save"/></svg>Size: 677.0KB</span>
      <div class="ps-right">
        <svg class="ic"><use href="#i-capture"/></svg>
        <div class="ps-zoom"><span>100%</span><svg class="chev"><use href="#i-chev"/></svg></div>
        <svg class="ic"><use href="#i-zoomout"/></svg>
        <div class="ps-slider"><span class="ps-knob"></span></div>
        <svg class="ic"><use href="#i-zoomin"/></svg>
      </div>
    </footer>
  </section>

  <div class="taskbar taskbar-line">
    <div class="weather">
      <svg class="ic umbrella"><use href="#i-umbrella"/></svg>
      <span class="weather-badge">2</span>
      <div class="weather-text"><span>Dias de chuva à...</span><span class="dim">24°C</span></div>
    </div>
    <svg class="ic win-ic"><use href="#i-win"/></svg>
    <div class="search">
      <svg class="ic"><use href="#i-search"/></svg>
      <span>Pesquisar</span>
      <svg class="ic game"><use href="#i-game"/></svg>
    </div>
    <div class="apps">
      <span class="app"><svg class="ic"><use href="#i-taskview"/></svg></span>
      <span class="app"><svg class="ic"><use href="#i-store"/></svg></span>
      <span class="app"><svg class="ic"><use href="#i-taskmgr"/></svg><i class="dot"></i></span>
      <span class="app"><svg class="ic"><use href="#i-chrome"/></svg></span>
      <span class="app"><svg class="ic"><use href="#i-edge"/></svg><i class="dot"></i></span>
      <span class="app app-active"><svg class="ic"><use href="#i-vivaldi-red"/></svg><i class="dot"></i></span>
      <span class="app"><svg class="ic"><use href="#i-folder"/></svg><i class="dot"></i></span>
      <span class="app"><svg class="ic"><use href="#i-term"/></svg><i class="dot"></i></span>
      <span class="app"><svg class="ic"><use href="#i-gpt"/></svg><i class="dot"></i></span>
      <span class="app"><svg class="ic"><use href="#i-word"/></svg><i class="dot"></i></span>
      <span class="app"><svg class="ic"><use href="#i-paintapp"/></svg><i class="dot"></i></span>
    </div>
    <div class="tray tray-clock-only">
      <div class="clock"><span>07:37</span><span>29/08/2025</span></div>
    </div>
  </div>
</main>

</body>
</html>
```

FILE: styles.css
```css
* {
  margin: 0;
  padding: 0;
  box-sizing: border-box;
}

body {
  display: flex;
  width: 3840px;
  height: 1124px;
  overflow: hidden;
  background-color: #000;
  font-family: Roboto, "Liberation Sans", sans-serif;
  font-size: 12px;
  color: #fff;
}

.sprite {
  position: absolute;
}

.ic {
  display: block;
  flex: none;
  width: 18px;
  height: 18px;
  fill: none;
  stroke: currentColor;
  stroke-width: 1.4;
  stroke-linejoin: round;
  stroke-linecap: round;
}

.chev {
  display: block;
  flex: none;
  width: 12px;
  height: 12px;
  fill: none;
  stroke: #ccc;
  stroke-width: 1;
}

.dim-chev {
  stroke: #777;
}

.dim-ic {
  color: #8a8a8a;
}

.screen {
  display: flex;
  flex-direction: column;
  flex: none;
  width: 1920px;
  height: 1124px;
}

.screen-paint {
  padding-top: 44px;
}

/* ---------- browser ---------- */

.browser {
  display: flex;
  flex-direction: column;
  flex: none;
  width: 1920px;
  height: 1032px;
  color: #3f3f3f;
}

.browser-orange {
  border-top: 1px solid #5a5c60;
}

.tabbar {
  display: flex;
  align-items: center;
  flex: none;
  height: 42px;
  padding: 0 14px 0 10px;
  background-color: #9a9ea6;
  border-bottom: 1px solid #7e8187;
  color: #fff;
}

.logo {
  width: 18px;
  height: 18px;
}

.tri {
  flex: none;
  width: 0;
  height: 0;
  margin-left: 8px;
  border-left: 4px solid transparent;
  border-right: 4px solid transparent;
  border-top: 5px solid #d2d4d8;
}

.ws-ic {
  margin-left: 13px;
  width: 20px;
  height: 20px;
}

.ws-label {
  flex: none;
  width: 72px;
  margin-left: 6px;
  font-size: 13px;
  color: #eef0f2;
}

.ws-label + .tri {
  margin-left: 5px;
}

.tab {
  display: flex;
  align-items: center;
  flex: none;
  gap: 5px;
  width: 175px;
  height: 30px;
  margin-left: 5px;
  padding-left: 5px;
  border-radius: 10px;
  background-color: #a8adb3;
  font-size: 13px;
  color: #f4f5f6;
  white-space: nowrap;
}

.tab:first-of-type {
  margin-left: 16px;
}

.tab .ic {
  width: 18px;
  height: 18px;
  stroke-width: 1.2;
}

.tab-active {
  background-color: #f6f6f6;
  color: #555;
  box-shadow: 0 1px 2px rgba(0, 0, 0, 0.25);
}

.new-tab {
  margin-left: 13px;
}

.win-controls {
  display: flex;
  align-items: center;
  margin-left: auto;
  gap: 16px;
}

.ctl-min {
  margin-left: 13px;
}

.ctl {
  margin-left: 11px;
  stroke-width: 1.1;
}

.ctl-min + .ctl {
  margin-left: 12px;
}

.addressbar {
  display: flex;
  align-items: center;
  flex: none;
  height: 41px;
  background-color: #f6f6f6;
  border-bottom: 2px solid #e2e2e2;
}

.panel-ic {
  margin-left: 11px;
}

.nav-back {
  margin-left: 53px;
}

.nav-fwd {
  margin-left: 18px;
  color: #a8a8a8;
}

.nav-reload {
  margin-left: 20px;
}

.urlfield {
  display: flex;
  align-items: center;
  flex: none;
  width: 1619px;
  height: 28px;
  margin-left: 15px;
  padding-left: 5px;
  background-color: #fff;
  border-radius: 12px;
  box-shadow: 0 1px 1px rgba(0, 0, 0, 0.08);
  white-space: nowrap;
}

.shield {
  width: 16px;
  height: 18px;
}

.info {
  margin-left: 10px;
  width: 16px;
  height: 18px;
}

.not-secure {
  margin-left: 5px;
  font-size: 11.5px;
  color: #444;
}

.url {
  margin-left: 9px;
  font-size: 13.500px;
  color: #999;
}

.url b {
  font-weight: 400;
  color: #222;
}

.url-mark {
  margin-left: auto;
  margin-right: 7px;
  width: 14px;
  height: 16px;
  color: #333;
}

.gift {
  margin-left: 44px;
  width: 22px;
  height: 22px;
}

.avatar {
  margin-left: 14px;
  width: 24px;
  height: 24px;
}

.browser-main {
  display: flex;
  flex: 1;
  min-height: 0;
}

.sidebar {
  display: flex;
  flex-direction: column;
  align-items: center;
  flex: none;
  width: 41px;
  padding-top: 14px;
  gap: 19px;
  background-color: #f5f5f8;
  border-right: 2px solid #d4d4d6;
  color: #444;
}

.sidebar .ic {
  width: 18px;
  height: 18px;
}

.sidebar .yt {
  width: 16px;
  height: 12px;
  margin: 3px 0;
}

.side-rule {
  width: 16px;
  margin: -1px 0 -3px;
  border: none;
  border-top: 1px solid #c6c6c8;
}

.wiki {
  height: 18px;
  font-family: "Liberation Serif", serif;
  font-size: 15px;
  line-height: 18px;
  color: #111;
}

.page {
  flex: 1;
  display: flex;
  justify-content: center;
  min-width: 0;
  overflow: hidden;
}

.page-gutter {
  flex: none;
  width: 15px;
}

.browser-teal .page {
  background: linear-gradient(135deg, #58c095 0%, #2ad3a8 50%, #24cab5 100%);
}

.browser-orange .page {
  background: linear-gradient(120deg, #f27a55 0%, #d98760 30%, #b68f68 62%, #9aa680 100%);
}

.profile {
  flex: none;
  width: 898px;
  padding: 23px 49px 0;
  background-color: rgba(0, 0, 0, 0.76);
  border-left: 1px solid rgba(255, 255, 255, 0.12);
  border-right: 1px solid rgba(255, 255, 255, 0.3);
  box-shadow: 0 0 22px rgba(0, 0, 0, 0.35);
  text-align: center;
  font-family: "Open Sans", "Liberation Sans", sans-serif;
}

.browser-orange .profile {
  padding-top: 25px;
}

.btn {
  display: inline-block;
  height: 41px;
  padding: 0 20px;
  border-radius: 8px;
  background: linear-gradient(100deg, #23a6d5, #23d5ab);
  font-family: "Liberation Sans", sans-serif;
  font-size: 17.6px;
  font-weight: 700;
  line-height: 40px;
  letter-spacing: 1px;
  color: #fff;
}

.btn-first {
  display: block;
  width: max-content;
  margin: 0 auto 48px;
}

.btn-wide {
  display: block;
  height: 49px;
  margin-top: 48px;
  line-height: 47px;
  font-size: 17.6px;
}

.rule {
  margin-top: 48px;
  border: none;
  border-top: 1px solid rgba(255, 255, 255, 0.2);
}

.section-title {
  margin-top: 35px;
  padding-bottom: 16px;
  border-bottom: 1px solid rgba(255, 255, 255, 0.2);
  font-family: Lato, "Open Sans", sans-serif;
  font-size: 32px;
  font-weight: 300;
  line-height: 40px;
  color: #f2f2f2;
}

.btn-wide + .section-title {
  margin-top: 51px;
}

.thought-input {
  display: block;
  position: relative;
  width: 100%;
  height: 99px;
  margin-top: 32px;
  padding: 15px;
  resize: vertical;
  outline: none;
  background-color: #232323;
  border: 1px solid #444;
  border-radius: 8px;
  font-family: "Liberation Mono", monospace;
  font-size: 14.67px;
  line-height: 17px;
  color: #eee;
  text-align: left;
}

.thought-input::placeholder {
  color: #757575;
}

.thought-input-focus {
  background-color: #202020;
  border-color: #23d5ab;
  box-shadow: 0 0 9px rgba(35, 213, 171, 0.45);
}

.thought-input-focus u {
  text-decoration: underline wavy #d01818 1px;
  text-underline-offset: 2px;
}

.caret {
  box-shadow: 1px 0 0 #ddd;
}

.grip {
  position: absolute;
  right: 1px;
  bottom: 1px;
  width: 9px;
  height: 9px;
  fill: none;
  stroke: #aaa;
  stroke-width: 1;
}

.thought {
  margin-top: 15px;
  padding: 25px;
  padding-left: 24px;
  background-color: rgba(0, 0, 0, 0.32);
  border-left: 4px solid #23d5ab;
  border-radius: 10px;
  text-align: left;
}

.section-title + .thought {
  margin-top: 24px;
}

.evil {
  margin: 21px 0 23px;
  font-size: 32px;
  font-weight: 700;
  line-height: 44px;
  letter-spacing: -0.6px;
  color: #f00;
}

.body {
  font-size: 17.6px;
  line-height: 24px;
  color: #f2f2f2;
}

.date {
  margin-top: 12px;
  font-size: 13.2px;
  font-style: italic;
  line-height: 20px;
  color: #aaa;
}

.page-scroll {
  display: flex;
  flex-direction: column;
  align-items: center;
  flex: none;
  width: 15px;
  padding: 4px 0;
  background-color: #2b2b2b;
}

.arrow-up,
.arrow-down {
  flex: none;
  width: 0;
  height: 0;
  border-left: 4px solid transparent;
  border-right: 4px solid transparent;
}

.arrow-up {
  border-bottom: 8px solid #9a9a9a;
}

.arrow-down {
  margin-top: auto;
  border-top: 8px solid #9a9a9a;
}

.page-thumb {
  width: 9px;
  height: 443px;
  margin-top: 256px;
  border-radius: 5px;
  background-color: #a0a0a0;
}

.statusbar {
  display: flex;
  align-items: center;
  flex: none;
  height: 35px;
  padding-left: 11px;
  gap: 17px;
  background-color: #f6f6f6;
  border-top: 1px solid #dcdcdc;
  border-bottom: 1px solid #444;
}

.status-right {
  display: flex;
  align-items: center;
  margin-left: auto;
  gap: 16px;
  padding-right: 12px;
}

.reset {
  margin-left: -3px;
  color: #9b9b9b;
}

.zoom-track {
  position: relative;
  width: 128px;
  height: 6px;
  margin-left: -5px;
  border-radius: 3px;
  background-color: #7a7a7a;
}

.zoom-knob {
  position: absolute;
  left: 19px;
  top: -6px;
  width: 16px;
  height: 18px;
  border-radius: 50%;
  background-color: #fff;
  border: 1.5px solid #555;
}

.zoom-pct {
  margin-left: -9px;
  color: #666;
}

.status-time {
  margin-left: 4px;
  color: #666;
}

/* ---------- taskbar ---------- */

.taskbar {
  display: flex;
  align-items: center;
  flex: none;
  height: 48px;
  background-color: #1c1c1c;
  position: relative;
}

.taskbar-line {
  border-top: 1px solid #3a3a3a;
}

.weather {
  position: relative;
  display: flex;
  align-items: center;
  width: 595px;
  padding-left: 18px;
}

.umbrella {
  width: 21px;
  height: 24px;
  margin-top: 6px;
}

.weather-badge {
  position: absolute;
  left: 30px;
  top: 1px;
  width: 16px;
  height: 16px;
  border-radius: 50%;
  background-color: #ff9aa2;
  color: #2a1a1a;
  font-size: 11px;
  line-height: 16px;
  text-align: center;
}

.weather-text {
  display: flex;
  flex-direction: column;
  gap: 1px;
  margin-left: 11px;
  font-size: 12px;
  line-height: 15px;
}

.dim {
  color: #c8c8c8;
}

.win-ic {
  width: 23px;
  height: 23px;
}

.search {
  display: flex;
  align-items: center;
  width: 220px;
  height: 32px;
  margin-left: 13px;
  padding-left: 11px;
  gap: 9px;
  background-color: #373737;
  border: 1px solid #454545;
  border-radius: 16px;
  font-size: 14px;
  color: #cfcfcf;
}

.search .game {
  width: 42px;
  height: 24px;
  margin-left: auto;
  margin-right: 8px;
}

.apps {
  display: flex;
  margin-left: 2px;
}

.app {
  position: relative;
  display: flex;
  align-items: center;
  justify-content: center;
  width: 44.2px;
  height: 40px;
}

.app .ic {
  width: 24px;
  height: 24px;
}

.dot {
  position: absolute;
  left: 50%;
  bottom: 0;
  width: 5px;
  height: 5px;
  margin-left: -2.5px;
  border-radius: 50%;
  background-color: #8a8a8a;
}

.app-active {
  background-color: #2a2a2a;
  border-radius: 4px;
  box-shadow: inset 0 0 0 1px #333;
}

.app-active .dot {
  width: 16px;
  height: 4px;
  margin-left: -8px;
  border-radius: 2px;
  background-color: #f08068;
}

.tray {
  display: flex;
  align-items: center;
  margin-left: auto;
  padding-right: 19px;
  color: #f0f0f0;
}

.tray .ic {
  width: 18px;
  height: 18px;
  margin-left: 8px;
}

.tray .ic:nth-child(2) {
  margin-left: 12px;
}

.lang {
  display: flex;
  flex-direction: column;
  align-items: center;
  width: 28px;
  margin: 0 14px 0 15px;
  line-height: 16px;
}

.clock {
  display: flex;
  flex-direction: column;
  align-items: flex-end;
  margin-left: 15px;
  line-height: 16px;
}

.tray-clock-only {
  padding-right: 23px;
  color: #c8c8c8;
}

/* ---------- paint ---------- */

.paint {
  display: flex;
  flex-direction: column;
  flex: none;
  height: 1032px;
  background-color: #202020;
  color: #e8e8e8;
}

.paint-title {
  display: flex;
  align-items: center;
  flex: none;
  height: 24px;
  padding-left: 2px;
  gap: 5px;
  background-color: #202020;
  color: #9a9a9a;
  font-size: 12px;
}

.paint-title .ic {
  width: 16px;
  height: 16px;
}

.paint-ctl {
  display: flex;
  margin-left: auto;
  gap: 27px;
  padding-right: 17px;
  color: #777;
}

.paint-menu {
  display: flex;
  align-items: center;
  flex: none;
  height: 39px;
  padding: 0 15px 0 13px;
  background-color: #202020;
  font-size: 13px;
}

.menu-item {
  width: 51px;
}

.menu-item:nth-child(3) {
  width: 47px;
}

.menu-sep {
  width: 1px;
  height: 24px;
  margin: 0 13px;
  background-color: #3a3a3a;
}

.paint-menu .ic {
  width: 18px;
  height: 20px;
}

.redo {
  margin-left: 21px;
  color: #666;
}

.menu-profile {
  margin-left: auto;
  color: #ccc;
  stroke-width: 1.2;
}

.menu-gear {
  margin-left: 18px;
}

.ribbon {
  display: flex;
  flex: none;
  height: 109px;
  background-color: #262626;
  border-top: 1px solid #1c1c1c;
  border-bottom: 1px solid #1c1c1c;
}

.group {
  display: flex;
  flex-direction: column;
  align-items: center;
  margin: 5px 0 4px;
  border-right: 1px solid #3a3a3a;
}

.group-body {
  display: flex;
  align-items: center;
  justify-content: center;
  height: 80px;
}

.group-label {
  margin-top: 1px;
  font-size: 12px;
  line-height: 16px;
  color: #cfcfcf;
}

.group-selection {
  width: 74px;
}

.group-image {
  width: 159px;
}

.group-tools {
  width: 137px;
}

.group-brushes {
  width: 68px;
}

.group-shapes {
  width: 289px;
}

.group-colors {
  width: 354px;
}

.group-copilot {
  width: 65px;
}

.group-layers {
  width: 64px;
  border-right: none;
}

.sel-box {
  display: flex;
  flex-direction: column;
  align-items: center;
  width: 32px;
  height: 48px;
  padding-top: 4px;
  border: 1.5px solid #e0735a;
  border-radius: 4px;
  background-color: #303030;
}

.sel-box .ic {
  width: 26px;
  height: 27px;
}

.sel-box .chev {
  margin-top: 4px;
}

.image-grid {
  display: grid;
  grid-template-columns: 24px 42px 24px;
  grid-template-rows: 40px 40px;
  column-gap: 17px;
  align-items: center;
  justify-items: center;
}

.image-grid .tall {
  grid-row: 1 / span 2;
  grid-column: 3;
  width: 24px;
  height: 24px;
}

.image-grid > :nth-child(4) {
  grid-column: 1;
  grid-row: 2;
}

.image-grid > :nth-child(5) {
  grid-column: 2;
  grid-row: 2;
}

.image-grid .ic,
.tool-grid .ic {
  width: 22px;
  height: 22px;
}

.with-chev {
  display: flex;
  align-items: center;
  gap: 4px;
}

.tool-grid {
  display: grid;
  grid-template-columns: repeat(3, 40px);
  grid-template-rows: 40px 40px;
  align-items: center;
  justify-items: center;
}

.stack {
  display: flex;
  flex-direction: column;
  align-items: center;
  gap: 5px;
}

.big {
  width: 26px;
  height: 26px;
}

.shapes-body {
  justify-content: flex-start;
  align-self: flex-start;
  width: 100%;
  padding-left: 10px;
}

.shape-box {
  flex: none;
  align-self: flex-start;
  background-color: #262626;
  border: 1px solid #3a3a3a;
  border-radius: 6px;
}

.shape-opts {
  display: grid;
  grid-template-rows: 40px 40px;
  align-items: center;
  margin-left: 13px;
}

.shape-opts .ic {
  width: 20px;
  height: 20px;
}

.shape-opts + .stack {
  margin-left: 15px;
}

.shape-opts + .stack .ic {
  width: 24px;
  height: 24px;
}

.colors-body {
  justify-content: flex-start;
  width: 100%;
  padding-left: 14px;
}

.current-colors {
  display: flex;
  flex-direction: column;
  align-items: center;
  gap: 8px;
  width: 30px;
}

.color-now {
  width: 30px;
  height: 30px;
  border-radius: 50%;
  background-color: #000;
  border: 2px solid #222;
  box-shadow: 0 0 0 1px #e0735a;
}

.color-alt {
  width: 24px;
  height: 24px;
  border-radius: 50%;
  background-color: #fff;
}

.palette {
  display: grid;
  grid-template-columns: repeat(10, 16px);
  grid-template-rows: repeat(3, 16px);
  gap: 8px;
  margin-left: 13px;
}

.palette i {
  display: block;
  border-radius: 50%;
}

.palette .empty {
  border: 1px solid #666;
}

.wheel {
  position: relative;
  margin-left: 21px;
}

.wheel .ic {
  width: 24px;
  height: 24px;
}

.wheel-plus {
  position: absolute;
  right: -3px;
  top: -3px;
  width: 11px;
  height: 11px;
  border-radius: 50%;
  background-color: #555;
  border: 1px solid #ddd;
  font-size: 10px;
  line-height: 9px;
  text-align: center;
}

.group-copilot .stack {
  gap: 8px;
}

.canvas-row {
  display: flex;
  flex: 1;
  min-height: 0;
}

.canvas {
  position: relative;
  flex: 1;
  min-width: 0;
  padding: 32px 0 0 32px;
  overflow: hidden;
  background-color: #202020;
}

.handle {
  position: absolute;
  left: 27px;
  z-index: 2;
  width: 5px;
  height: 5px;
  background-color: #fff;
  box-shadow: 0 0 0 1px #000;
}

.handle-top {
  top: 28px;
}

.handle-mid {
  top: 593px;
}

.canvas-vscroll {
  display: flex;
  flex-direction: column;
  align-items: center;
  flex: none;
  width: 12px;
  padding: 4px 0;
  background-color: #202020;
}

.canvas-thumb {
  width: 4px;
  height: 770px;
  margin-top: 6px;
  border-radius: 2px;
  background-color: #8f8f8f;
}

.canvas-hscroll {
  display: flex;
  align-items: center;
  flex: none;
  height: 12px;
  padding: 0 4px;
  background-color: #2b2b2b;
}

.arrow-left,
.arrow-right {
  flex: none;
  width: 0;
  height: 0;
  border-top: 4px solid transparent;
  border-bottom: 4px solid transparent;
}

.arrow-left {
  border-right: 6px solid #9a9a9a;
}

.arrow-right {
  margin-left: auto;
  margin-right: 12px;
  border-left: 6px solid #9a9a9a;
}

.canvas-hthumb {
  width: 922px;
  height: 6px;
  margin-left: 5px;
  border-radius: 3px;
  background-color: #9a9a9a;
}

.paint-status {
  display: flex;
  align-items: center;
  flex: none;
  height: 38px;
  background-color: #202020;
  font-size: 13px;
  color: #e4e4e4;
}

.ps-cell {
  display: flex;
  align-items: center;
  gap: 6px;
  width: 132.5px;
  height: 24px;
  padding-left: 7px;
  border-right: 1px solid #333;
  white-space: nowrap;
}

.ps-cursor {
  width: 134px;
  padding-left: 9px;
  border-right: 1px solid #333;
}

.ps-last {
  border-right: none;
  padding-left: 12px;
}

.ps-cell .ic {
  width: 16px;
  height: 18px;
}

.ps-right {
  display: flex;
  align-items: center;
  margin-left: auto;
  padding-right: 11px;
}

.ps-zoom {
  display: flex;
  align-items: center;
  justify-content: space-between;
  width: 92px;
  height: 29px;
  margin: 0 15px 0 15px;
  padding: 0 14px 0 12px;
  background-color: #2b2b2b;
  border-radius: 4px;
}

.ps-slider {
  position: relative;
  width: 130px;
  height: 7px;
  margin: 0 10px;
  border-radius: 4px;
  background: linear-gradient(90deg, #f08068 16%, #9a9a9a 16%);
}

.ps-knob {
  position: absolute;
  left: 14px;
  top: -3px;
  width: 13px;
  height: 13px;
  border-radius: 50%;
  background-color: #f08068;
  box-shadow: 0 0 0 4px #454545;
}
```
